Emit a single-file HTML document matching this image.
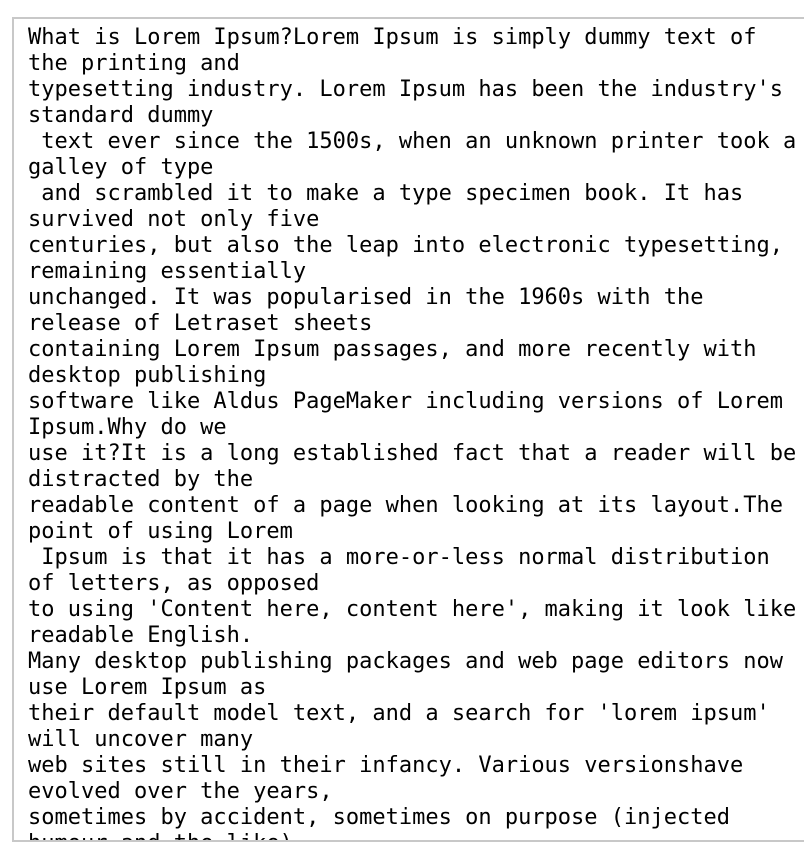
<!DOCTYPE html>
<html><head><meta charset="utf-8"><style>
html,body{margin:0;padding:0;background:#fff;width:804px;height:852px;overflow:hidden}
.box{position:absolute;left:12px;top:17px;width:800px;height:821px;border:2px solid #c8c8c8;overflow:hidden;box-sizing:content-box}
pre{position:absolute;left:14px;top:6px;margin:0;font-family:"DejaVu Sans Mono","Liberation Mono",monospace;font-size:22px;line-height:26px;color:#000}
</style></head><body><div class="box"><pre>What is Lorem Ipsum?Lorem Ipsum is simply dummy text of
the printing and
typesetting industry. Lorem Ipsum has been the industry's
standard dummy
 text ever since the 1500s, when an unknown printer took a
galley of type
 and scrambled it to make a type specimen book. It has
survived not only five
centuries, but also the leap into electronic typesetting,
remaining essentially
unchanged. It was popularised in the 1960s with the
release of Letraset sheets
containing Lorem Ipsum passages, and more recently with
desktop publishing
software like Aldus PageMaker including versions of Lorem
Ipsum.Why do we
use it?It is a long established fact that a reader will be
distracted by the
readable content of a page when looking at its layout.The
point of using Lorem
 Ipsum is that it has a more-or-less normal distribution
of letters, as opposed
to using 'Content here, content here', making it look like
readable English.
Many desktop publishing packages and web page editors now
use Lorem Ipsum as
their default model text, and a search for 'lorem ipsum'
will uncover many
web sites still in their infancy. Various versionshave
evolved over the years,
sometimes by accident, sometimes on purpose (injected
humour and the like).</pre></div></body></html>
